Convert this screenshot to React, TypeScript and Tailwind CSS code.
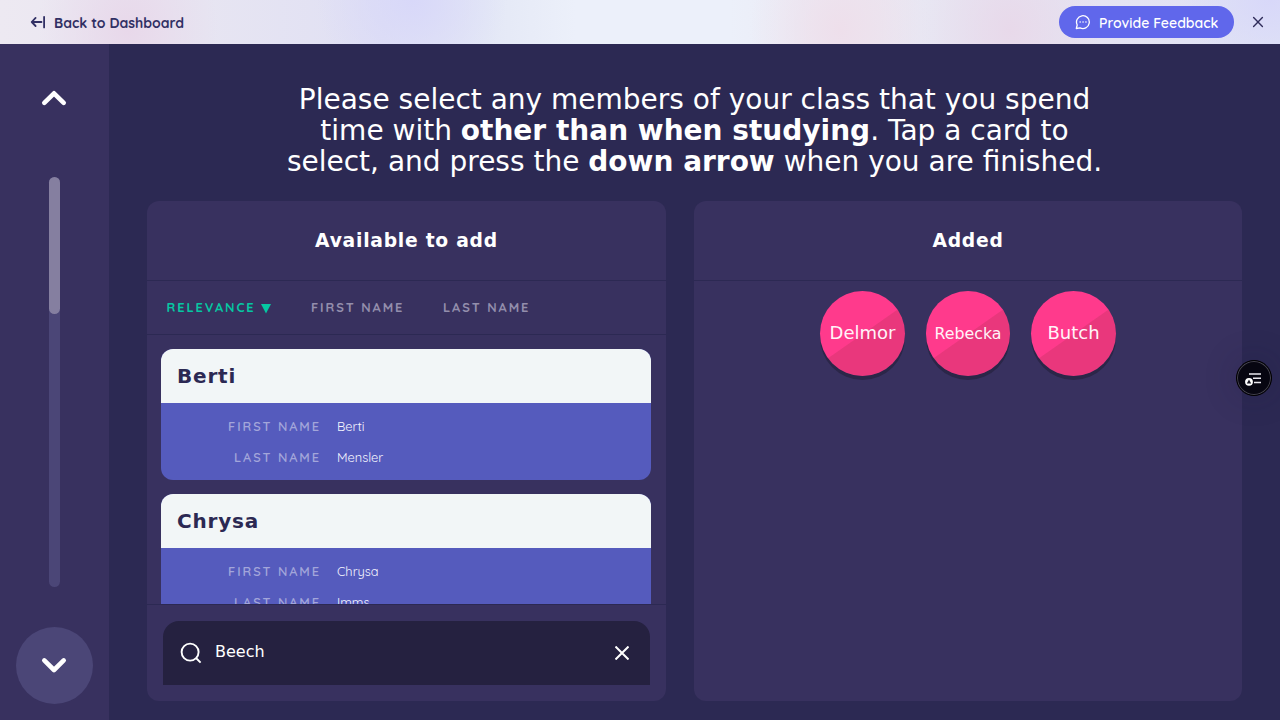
import React from "react";

type Student = { first: string; last: string };

const students: Student[] = [
  { first: "Berti", last: "Mensler" },
  { first: "Chrysa", last: "Imms" },
];

const added = [
  { name: "Delmor", size: "text-[18px]" },
  { name: "Rebecka", size: "text-[15.8px] pt-1" },
  { name: "Butch", size: "text-[18px]" },
];

function TopBar() {
  return (
    <header className="flex h-11 shrink-0 items-center bg-[#e8e8f4] bg-[radial-gradient(ellipse_90px_110px_at_128px_30px,#e8d8ea_0%,#e8d8ea00_100%),radial-gradient(ellipse_95px_90px_at_412px_0px,#d8d8f9_0%,#d8d8f900_100%),radial-gradient(ellipse_90px_110px_at_840px_30px,#eedfeb_0%,#eedfeb00_100%),radial-gradient(ellipse_90px_110px_at_1010px_30px,#e8d9ea_0%,#e8d9ea00_100%),radial-gradient(ellipse_90px_70px_at_1270px_0px,#d8d8f9_0%,#d8d8f900_100%),linear-gradient(90deg,#ede9f2_0%,#e7e5f2_16%,#e0e0f4_30%,#e4e8f6_38%,#ecf0fa_45%,#ecf0fa_57%,#ebe8f2_68%,#e8e7f3_72%,#e5e3f2_85%,#dfe2f6_100%)] pl-[30px] pr-[15px] font-['Quicksand','Lato',sans-serif] text-[14px]">
      <a className="flex items-center gap-2 font-bold text-[#313064]">
        <svg width="16" height="14" viewBox="0 0 16 14" fill="none" stroke="currentColor" strokeWidth="1.8" strokeLinecap="round" strokeLinejoin="round">
          <path d="M5.6 2.9 1.7 7l3.9 4M1.7 7h9.8M14.1 1.8v10.6" />
        </svg>
        <span className="mt-0.5 whitespace-nowrap">Back to Dashboard</span>
      </a>
      <button className="mb-0 ml-auto flex h-8 w-[175px] items-center rounded-full bg-[#6067eb] pl-4 font-semibold text-white">
        <svg width="16" height="16" viewBox="0 0 16 16" fill="none" stroke="currentColor" strokeWidth="1.3" strokeLinecap="round" strokeLinejoin="round">
          <path d="M1.3 14.5 2.2 11A6.4 6.4 0 1 1 5 13.8Z" />
          <path d="M5.1 8h.1M8 8h.1M10.9 8h.1" strokeWidth="1.5" />
        </svg>
        <span className="ml-2 mt-0.5 whitespace-nowrap">Provide Feedback</span>
      </button>
      <svg className="ml-[17px]" width="14" height="14" viewBox="0 0 14 14" fill="none" stroke="#302d5b" strokeWidth="1.4" strokeLinecap="round">
        <path d="m2.6 2.6 8.8 8.8M11.4 2.6l-8.8 8.8" />
      </svg>
    </header>
  );
}

function Sidebar() {
  return (
    <nav className="flex w-[109px] shrink-0 flex-col items-center bg-[#38315f]">
      <svg className="mr-px mt-[46px]" width="26" height="17" viewBox="0 0 26 17" fill="none" stroke="#fff" strokeWidth="4.6" strokeLinecap="round" strokeLinejoin="round">
        <path d="M3.3 12.8 13 3.3 22.7 12.8" />
      </svg>
      <div className="mt-[70px] h-[410px] w-[11px] rounded-full bg-[#4b4677]">
        <div className="h-[137px] rounded-full bg-[#857fa0]" />
      </div>
      <button className="mt-10 flex h-[77px] w-[77px] items-center justify-center rounded-full bg-[#4b4677]">
        <svg className="mr-px" width="26" height="17" viewBox="0 0 26 17" fill="none" stroke="#fff" strokeWidth="4.6" strokeLinecap="round" strokeLinejoin="round">
          <path d="M3.3 3.4 13 13 22.7 3.4" />
        </svg>
      </button>
    </nav>
  );
}

function Field({ label, value }: { label: string; value: string }) {
  return (
    <div className="flex h-[31px] items-center">
      <span className="w-[160px] shrink-0 whitespace-nowrap text-right text-[12.8px] font-semibold tracking-[1.92px] text-[#a3a6da]">{label}</span>
      <span className="ml-4 text-[12.8px] text-[#f6f6fd]">{value}</span>
    </div>
  );
}

function StudentCard({ first, last }: Student) {
  return (
    <article className="shrink-0 overflow-hidden rounded-xl bg-[#555bbd]">
      <h3 className="flex h-[54px] items-center bg-[#f2f6f7] px-4 font-['DejaVu_Sans',sans-serif] text-[20px] font-bold tracking-[0.8px] text-[#2c2953]">{first}</h3>
      <div className="h-[77px] pt-2 font-['Quicksand','Lato',sans-serif]">
        <Field label="FIRST NAME" value={first} />
        <Field label="LAST NAME" value={last} />
      </div>
    </article>
  );
}

function Available() {
  return (
    <section className="flex h-[500px] w-[519px] shrink-0 flex-col rounded-xl bg-[#38315f]">
      <h2 className="flex h-20 shrink-0 items-center justify-center border-b border-[#2c2953] pt-0.5 text-[18.72px] font-bold tracking-[0.75px]">Available to add</h2>
      <div className="flex h-[54px] shrink-0 items-center border-b border-[#2c2953] pl-5 font-['Quicksand','Lato',sans-serif] text-[12.8px] font-bold text-[#938eac]">
        <span className="flex w-36 items-center whitespace-nowrap text-[#05c8a2]">
          <span className="-ml-[0.5px] tracking-[1.92px]">RELEVANCE</span>
          <svg className="ml-1 mt-0.5" width="12" height="10" viewBox="0 0 12 10" fill="currentColor"><path d="M1 0h10L6 9.5Z" /></svg>
        </span>
        <span className="w-[132px] whitespace-nowrap tracking-[1.92px]">FIRST NAME</span>
        <span className="whitespace-nowrap tracking-[1.92px]">LAST NAME</span>
      </div>
      <div className="flex h-[269px] shrink-0 flex-col gap-3.5 overflow-hidden pl-3.5 pr-[15px] pt-3.5">
        {students.map((s) => <StudentCard key={s.first} {...s} />)}
      </div>
      <div className="grow border-t border-[#2c2953] px-4 pt-4">
        <div className="flex h-16 w-[487px] items-center rounded-t-2xl bg-[#252140] pl-[17px] pr-[21px]">
          <svg width="22" height="22" viewBox="0 0 22 22" fill="none" stroke="#fff" strokeWidth="1.9">
            <circle cx="10.1" cy="10.1" r="8.5" />
            <path d="m16 16 4.6 4.7" />
          </svg>
          <span className="-mt-0.5 ml-[13px] text-[16px]">Beech</span>
          <svg className="ml-auto" width="14" height="14" viewBox="0 0 14 14" fill="none" stroke="#fff" strokeWidth="2">
            <path d="m.5.5 13 13M13.5.5l-13 13" />
          </svg>
        </div>
      </div>
    </section>
  );
}

function Added() {
  return (
    <section className="flex h-[500px] w-[548px] shrink-0 flex-col rounded-xl bg-[#38315f]">
      <h2 className="flex h-20 shrink-0 items-center justify-center border-b border-[#2c2953] pt-0.5 text-[18.72px] font-bold tracking-[0.75px]">Added</h2>
      <div className="flex justify-center gap-[21px] pt-[10.4px]">
        {added.map((a) => (
          <div key={a.name} className={"flex h-[84.5px] w-[84.5px] items-center justify-center rounded-full bg-[linear-gradient(145deg,#ff3a8c_50%,#e9377c_50.8%)] pb-[3px] text-[#fff3f8] shadow-[0_4px_0_#2b2648] " + a.size}>{a.name}</div>
        ))}
      </div>
    </section>
  );
}

export default function App() {
  return (
    <div className="relative flex h-[720px] w-[1280px] flex-col overflow-hidden bg-[#2c2953] font-['DejaVu_Sans',sans-serif] text-white">
      <TopBar />
      <div className="flex min-h-0 grow">
        <Sidebar />
        <main className="flex grow flex-col pl-[38px]">
          <h1 className="mt-10 h-[93px] w-[1095px] whitespace-nowrap text-center text-[28px] leading-[31px]">
            Please select any members of your class that you spend<br />
            time with <b>other than when studying</b>. Tap a card to<br />
            select, and press the <b>down arrow</b> when you are finished.
          </h1>
          <div className="mt-6 flex gap-7">
            <Available />
            <Added />
          </div>
        </main>
      </div>
      <button className="absolute left-[1236px] top-[360px] flex h-9 w-9 items-center justify-center rounded-full border border-black bg-[#070611] shadow-[0_0_32px_#1c193b40,inset_0_0_0_1px_#45434e]">
        <svg className="mr-[3px] mt-0.5" width="18" height="16" viewBox="0 0 18 16" fill="none">
          <path d="M5 3h12M9 7.3h8M10 11.6h7" stroke="#e9e7ee" strokeWidth="1.5" />
          <circle cx="5" cy="10.8" r="3.9" fill="#fff" />
          <path d="m5 8.4 2.2 4.1H2.8Z" fill="#171521" />
        </svg>
      </button>
    </div>
  );
}
